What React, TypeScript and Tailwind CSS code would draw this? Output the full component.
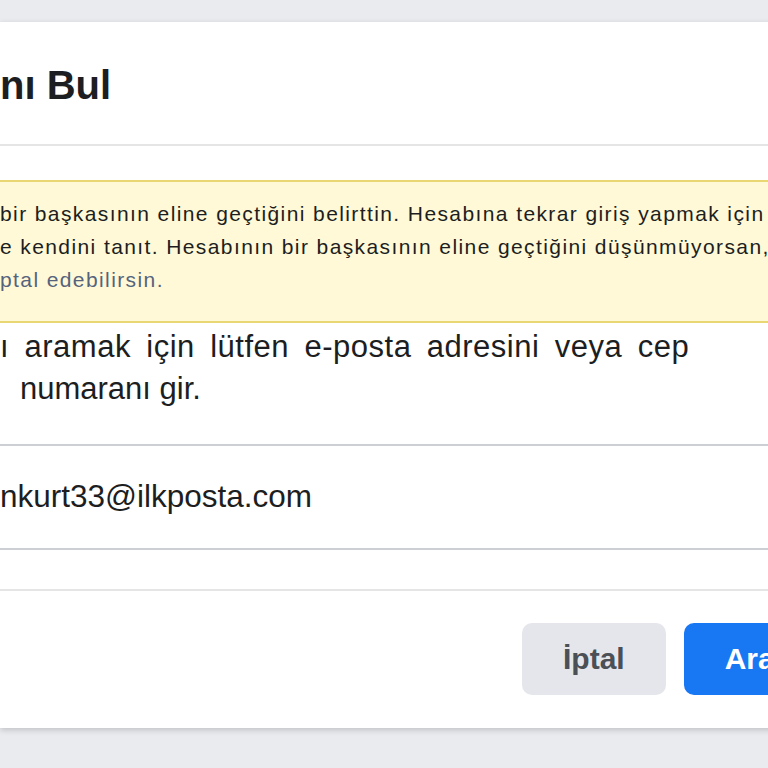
import React from 'react'

// Puts `hidden` just left of the line start so only `shown` sits on screen
function Cut({ hidden, shown, gap = '' }: { hidden: string; shown: React.ReactNode; gap?: string }) {
  return (
    <div className="flex whitespace-nowrap">
      <span className="flex w-0 justify-end">{hidden}</span>
      <span className={gap}>{shown}</span>
    </div>
  )
}

export default function App() {
  return (
    <div
      className="h-[768px] w-[768px] overflow-hidden bg-[#e9ebee] pt-[22px]"
      style={{ fontFamily: '"Liberation Sans", Arial, Helvetica, sans-serif' }}
    >
      <div className="w-[820px] bg-white shadow-[0_2px_6px_rgba(0,0,0,0.18)]">
        {/* Header */}
        <div className="flex h-[124px] items-center border-b-2 border-[#e5e5e5] pt-[4px]">
          <h1 className="text-[40px] font-bold leading-none text-[#1c1e21]">
            <Cut hidden="Hesabı" shown="nı Bul" />
          </h1>
        </div>

        {/* Body */}
        <div className="pt-[34px]">
          <div className="border-y-2 border-[#e9d774] bg-[#fff9d7] pt-[15px] pb-[25px] text-[21px] leading-[33px] tracking-[1.4px] text-[#1c1e21]">
            <Cut hidden="Hesabının " shown="bir başkasının eline geçtiğini belirttin. Hesabına tekrar giriş yapmak için" />
            <Cut hidden="önc" shown="e kendini tanıt. Hesabının bir başkasının eline geçtiğini düşünmüyorsan," />
            <div className="text-[#55637d]">
              <Cut hidden="bunu i" shown="ptal edebilirsin." />
            </div>
          </div>

          <div className="pt-[3px] text-[31px] leading-[42px] text-[#1c1e21]">
            <div className="tracking-[0.5px] [word-spacing:6.3px]">
              <Cut hidden="Hesabın" shown="ı aramak için lütfen e-posta adresini veya cep" />
            </div>
            <Cut hidden="cep telefonu" shown="numaranı gir." gap="ml-[20px]" />
          </div>

          <div className="mt-[34px] flex h-[106px] items-center border-y-2 border-[#ccd0d5] text-[31.5px] text-[#1c1e21]">
            <div className="whitespace-nowrap">nkurt33@ilkposta.com</div>
          </div>
        </div>

        {/* Footer */}
        <div className="mt-[39px] flex h-[139px] items-center gap-[18px] border-t-2 border-[#e5e5e5] pl-[522px] pb-[2px]">
          <button className="h-[72px] rounded-[10px] bg-[#e4e6eb] px-[41px] text-[30px] font-bold text-[#4b4f56]">
            İptal
          </button>
          <button className="h-[72px] rounded-[10px] bg-[#1877f2] px-[41px] text-[30px] font-bold text-white">
            Ara
          </button>
        </div>
      </div>
    </div>
  )
}
